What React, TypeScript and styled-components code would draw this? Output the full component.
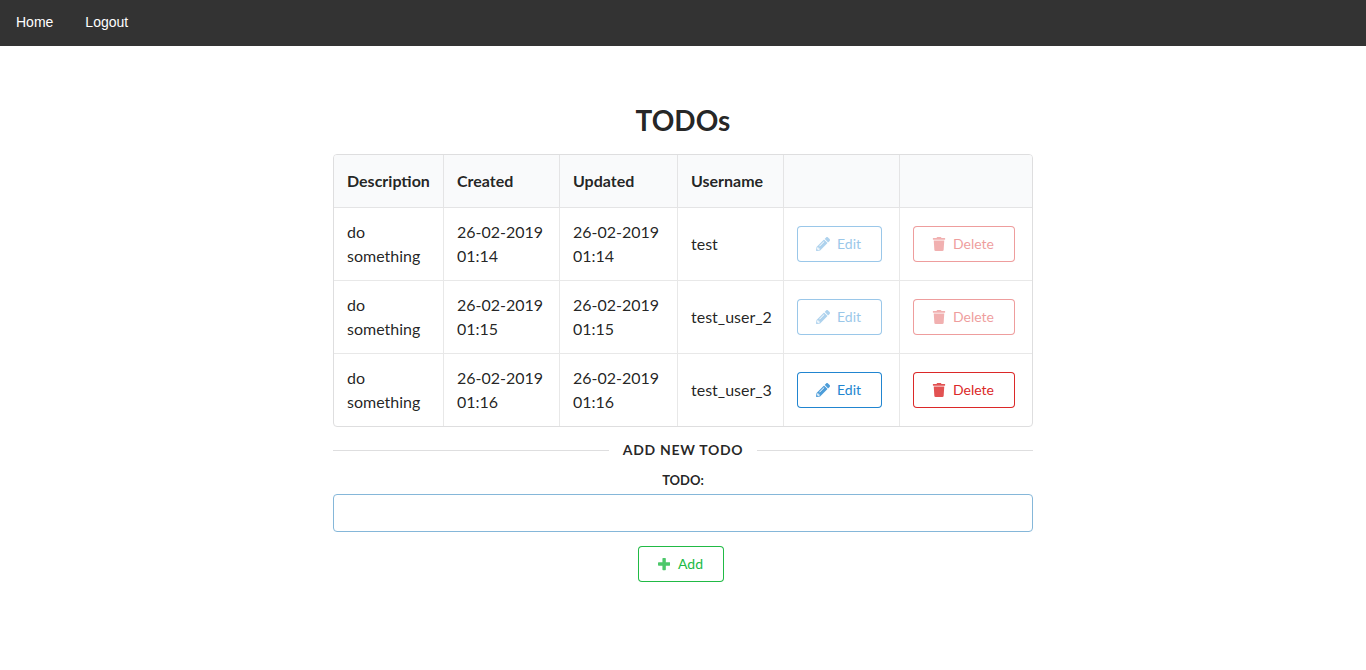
import React from "react";
import styled, { createGlobalStyle } from "styled-components";
import { FaPencilAlt, FaTrash } from "react-icons/fa";

const GlobalStyle = createGlobalStyle`
  *, *::before, *::after {
    box-sizing: border-box;
  }
  body {
    margin: 0;
    background: #fff;
    color: #212529;
    font-family: Lato, "Liberation Sans", Arial, sans-serif;
    font-size: 16px;
    line-height: 24px;
  }
`;

const NavBar = styled.nav`
  display: flex;
  height: 46px;
  background: #333;
`;

const NavLink = styled.a`
  padding: 10px 16px;
  color: #fff;
  font-family: "Liberation Sans", Arial, sans-serif;
  font-size: 14px;
  line-height: 24px;
  text-decoration: none;
`;

const Main = styled.main`
  max-width: 700px;
  margin: 0 auto;
  padding: 56px 0 32px;
`;

const Title = styled.h1`
  margin: 0 0 16px;
  color: rgba(0, 0, 0, 0.87);
  font-size: 28px;
  font-weight: 700;
  line-height: 36px;
  text-align: center;
`;

const TodoTable = styled.table`
  width: 100%;
  table-layout: fixed;
  border: 1px solid #dededf;
  border-radius: 4px;
  border-collapse: separate;
  border-spacing: 0;
  color: rgba(0, 0, 0, 0.87);
  text-align: left;
`;

const Column = styled.col<{ $width: number }>`
  width: ${({ $width }) => $width}px;
`;

const HeadCell = styled.th`
  padding: 14px 11px 14px 13px;
  background: #f9fafb;
  border-bottom: 1px solid #e4e4e5;
  font-weight: 700;

  & + & {
    border-left: 1px solid #e4e4e5;
  }
  &:first-child {
    border-top-left-radius: 3px;
  }
  &:last-child {
    border-top-right-radius: 3px;
  }
`;

const Cell = styled.td`
  padding: 12px 11px 12px 13px;

  & + & {
    border-left: 1px solid #e8e8e8;
  }
  tr + tr > & {
    border-top: 1px solid #e8e8e8;
  }
`;

const tones = { blue: "#2185d0", red: "#db2828", green: "#21ba45" };

const OutlineButton = styled.button<{ $tone: keyof typeof tones }>`
  display: inline-flex;
  align-items: center;
  gap: 6px;
  height: 36px;
  margin: 0 4px 0 0;
  padding: 0 21px 0 18px;
  border: 0;
  border-radius: 4px;
  background: transparent;
  box-shadow: 0 0 0 1px ${({ $tone }) => tones[$tone]} inset;
  color: ${({ $tone }) => tones[$tone]};
  font-family: inherit;
  font-size: 14px;
  font-weight: 400;
  line-height: 14px;
  vertical-align: middle;
  cursor: pointer;

  &:disabled {
    opacity: 0.45;
    cursor: default;
  }
`;

const IconSlot = styled.span`
  display: flex;
  justify-content: center;
  width: 16px;
  opacity: 0.8;

  svg {
    display: block;
    height: 14px;
    width: auto;
  }
`;

const Divider = styled.h2`
  display: flex;
  align-items: center;
  gap: 14px;
  margin: 11px 0 8px;
  color: rgba(0, 0, 0, 0.85);
  font-size: 14px;
  font-weight: 700;
  letter-spacing: 0.05em;
  line-height: 24px;
  text-transform: uppercase;

  &::before,
  &::after {
    content: "";
    flex: 1;
    height: 1px;
    background: #dededf;
  }
`;

const Form = styled.form`
  display: flex;
  flex-direction: column;
  align-items: center;
`;

const Label = styled.label`
  margin-bottom: 4px;
  color: rgba(0, 0, 0, 0.87);
  font-size: 13px;
  font-weight: 700;
  line-height: 20px;
`;

const TextInput = styled.input`
  width: 100%;
  height: 38px;
  margin: 0 0 14px;
  padding: 0 14px;
  border: 1px solid #85b7d9;
  border-radius: 4px;
  outline: 0;
  background: #fff;
  color: rgba(0, 0, 0, 0.8);
  font-family: inherit;
  font-size: 14px;
`;

const PlusIcon = () => (
  <svg viewBox="0 0 448 512" fill="currentColor" aria-hidden="true">
    <path d="M448 294.2v-76.4c0-13.3-10.7-24-24-24H286.2V56c0-13.3-10.7-24-24-24h-76.4c-13.3 0-24 10.7-24 24v137.8H24c-13.3 0-24 10.7-24 24v76.4c0 13.3 10.7 24 24 24h137.8V456c0 13.3 10.7 24 24 24h76.4c13.3 0 24-10.7 24-24V318.2H424c13.3 0 24-10.7 24-24z" />
  </svg>
);

const columnWidths = [109, 116, 118, 106, 116, 133];

const todos = [
  { id: 1, description: "do something", date: "26-02-2019", time: "01:14", user: "test", own: false },
  { id: 2, description: "do something", date: "26-02-2019", time: "01:15", user: "test_user_2", own: false },
  { id: 3, description: "do something", date: "26-02-2019", time: "01:16", user: "test_user_3", own: true },
];

export default function App() {
  return (
    <>
      <GlobalStyle />
      <NavBar>
        <NavLink href="#home">Home</NavLink>
        <NavLink href="#logout">Logout</NavLink>
      </NavBar>
      <Main>
        <Title>TODOs</Title>
        <TodoTable>
          <colgroup>
            {columnWidths.map((width, index) => (
              <Column key={index} $width={width} />
            ))}
          </colgroup>
          <thead>
            <tr>
              <HeadCell>Description</HeadCell>
              <HeadCell>Created</HeadCell>
              <HeadCell>Updated</HeadCell>
              <HeadCell>Username</HeadCell>
              <HeadCell />
              <HeadCell />
            </tr>
          </thead>
          <tbody>
            {todos.map((todo) => (
              <tr key={todo.id}>
                <Cell>{todo.description}</Cell>
                <Cell>{todo.date} {todo.time}</Cell>
                <Cell>{todo.date} {todo.time}</Cell>
                <Cell>{todo.user}</Cell>
                <Cell>
                  <OutlineButton type="button" $tone="blue" disabled={!todo.own}>
                    <IconSlot><FaPencilAlt /></IconSlot>
                    Edit
                  </OutlineButton>
                </Cell>
                <Cell>
                  <OutlineButton type="button" $tone="red" disabled={!todo.own}>
                    <IconSlot><FaTrash /></IconSlot>
                    Delete
                  </OutlineButton>
                </Cell>
              </tr>
            ))}
          </tbody>
        </TodoTable>
        <Divider>Add new todo</Divider>
        <Form onSubmit={(event) => event.preventDefault()}>
          <Label htmlFor="todo">TODO:</Label>
          <TextInput id="todo" type="text" />
          <OutlineButton type="submit" $tone="green">
            <IconSlot><PlusIcon /></IconSlot>
            Add
          </OutlineButton>
        </Form>
      </Main>
    </>
  );
}
